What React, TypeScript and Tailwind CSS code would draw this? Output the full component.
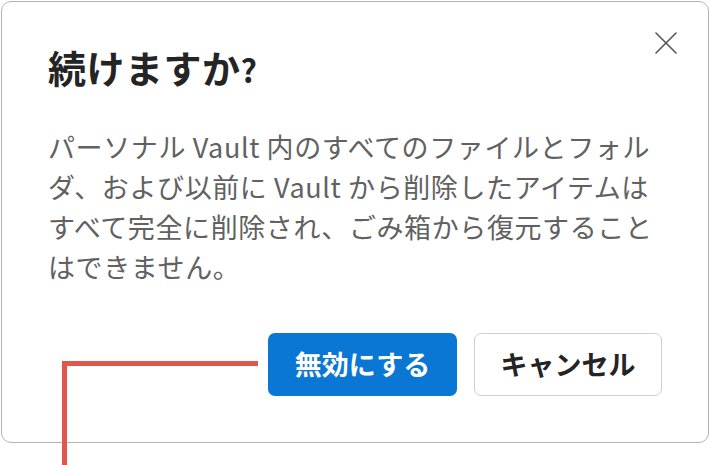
import React from 'react';

const lines = [
  'パーソナル Vault 内のすべてのファイルとフォル',
  'ダ、および以前に Vault から削除したアイテムは',
  'すべて完全に削除され、ごみ箱から復元すること',
  'はできません。',
];

function CloseIcon() {
  return (
    <svg width="22" height="22" viewBox="0 0 22 22" fill="none">
      <path d="M1 1L21 21M21 1L1 21" stroke="#555" strokeWidth="1.6" strokeLinecap="round" />
    </svg>
  );
}

export default function App() {
  return (
    <div
      className="relative w-[710px] h-[465px] bg-white overflow-hidden"
      style={{ fontFamily: '"Noto Sans CJK JP", "Noto Sans", sans-serif' }}
    >
      {/* Dialog */}
      <div className="relative mt-px ml-px w-[708px] h-[442px] border border-[#b4b4b4] rounded-[10px] bg-white px-[46px] pt-[41px] flex flex-col">
        <button className="absolute top-[30px] right-[31px]">
          <CloseIcon />
        </button>

        <h2 className="h-[48px] text-[38px] leading-[48px] font-bold text-[#242424] tracking-[0.5px]">
          続けますか<span className="text-[32px] leading-none">?</span>
        </h2>

        <p className="mt-[36px] text-[27px] leading-[40px] text-[#616161] whitespace-nowrap tracking-[0.6px]">
          {lines.map((line, i) => (
            <span key={i} className="block">
              {line}
            </span>
          ))}
        </p>

        <div className="mt-[46px] flex justify-end gap-[17px]">
          <button className="w-[189px] h-[63px] rounded-[7px] bg-[#0b77d5] text-white text-[27px] font-bold">
            無効にする
          </button>
          <button className="w-[188px] h-[63px] rounded-[7px] bg-white border border-[#cfcfcf] text-[#242424] text-[27px] font-bold">
            キャンセル
          </button>
        </div>
      </div>

      {/* Annotation line */}
      <div className="absolute left-[62px] top-[361px] w-[196px] h-[5px] bg-[#e0584c]" />
      <div className="absolute left-[62px] top-[361px] w-[5px] h-[104px] bg-[#e0584c]" />
    </div>
  );
}
